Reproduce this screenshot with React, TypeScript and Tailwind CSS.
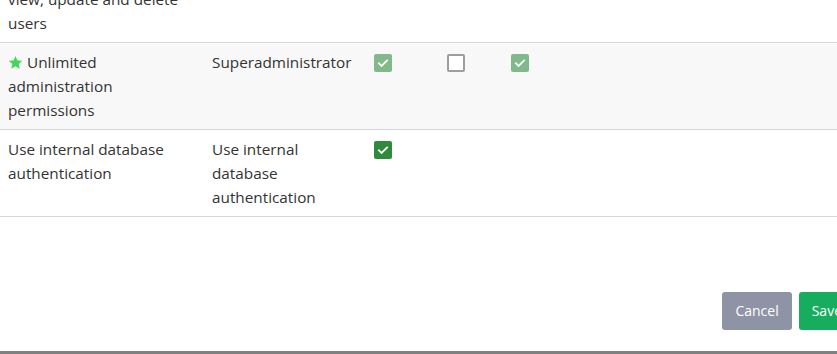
import React from "react"

type Perm = {
  label: React.ReactNode
  role: string
  boxes: ("on" | "off" | "locked" | null)[]
  shaded?: boolean
}

function Box({ state }: { state: "on" | "off" | "locked" | null }) {
  if (!state) return null
  if (state === "off") {
    return <span className="block h-[18px] w-[18px] rounded-[2px] border-2 border-[#9e9e9e] bg-white" />
  }
  const bg = state === "on" ? "bg-[#2f8a3b]" : "bg-[#82b98a]"
  return (
    <span className={`flex h-[18px] w-[18px] items-center justify-center rounded-[2px] ${bg}`}>
      <svg viewBox="0 0 24 24" className="h-[14px] w-[14px]" fill="none" stroke="white" strokeWidth={3} strokeLinecap="square">
        <path d="M5 12.5l4.5 4.5L19 7.5" />
      </svg>
    </span>
  )
}

function Star() {
  return (
    <svg viewBox="0 0 24 24" className="mr-[4px] inline-block h-[15px] w-[15px] align-[-2px]" fill="#3fd659">
      <path d="M12 1.5l3.1 7.2 7.8.6-5.9 5.1 1.8 7.6L12 18l-6.8 4 1.8-7.6-5.9-5.1 7.8-.6z" />
    </svg>
  )
}

const rows: Perm[] = [
  {
    label: (
      <>
        Manage users: create,
        <br />
        view, update and delete
        <br />
        users
      </>
    ),
    role: "",
    boxes: [null, null, null],
  },
  {
    label: (
      <>
        <Star />
        Unlimited administration permissions
      </>
    ),
    role: "Superadministrator",
    boxes: ["locked", "off", "locked"],
    shaded: true,
  },
  {
    label: "Use internal database authentication",
    role: "Use internal database authentication",
    boxes: ["on", null, null],
  },
]

export default function App() {
  return (
    <div className="h-[354px] w-[837px] overflow-hidden bg-white font-['Open_Sans',sans-serif] text-[15.3px] leading-6 text-[#333]">
      <div className="-mt-[44px]">
        <table className="w-full border-collapse">
          <colgroup>
            <col className="w-[204px]" />
            <col className="w-[162px]" />
            <col className="w-[73px]" />
            <col className="w-[64px]" />
            <col />
          </colgroup>
          <tbody>
            {rows.map((r, i) => (
              <tr key={i} className={`border-b border-[#d6d6d6] ${r.shaded ? "bg-[#f8f8f8]" : "bg-white"}`}>
                <td className="px-2 py-[7px] align-top">{r.label}</td>
                <td className="px-2 py-[7px] align-top">{r.role}</td>
                {r.boxes.map((b, j) => (
                  <td key={j} className="px-2 pb-[7px] pt-[11px] align-top">
                    <Box state={b} />
                  </td>
                ))}
              </tr>
            ))}
          </tbody>
        </table>
      </div>
      <div className="mt-[75px] flex justify-end gap-[7px] -mr-[18px]">
        <button className="h-[38px] rounded-[3px] bg-[#8f93a6] px-[13px] text-[14px] text-white">Cancel</button>
        <button className="h-[38px] rounded-[3px] bg-[#17ad5e] px-[13px] text-[14px] text-white">Save</button>
      </div>
      <div className="mt-[21px] h-[4px] bg-[#808080]" />
    </div>
  )
}
